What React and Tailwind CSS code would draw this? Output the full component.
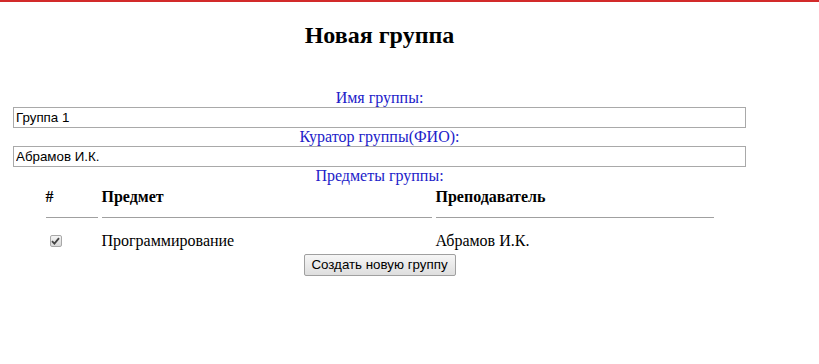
export default function App() {
  return (
    <div className="min-h-screen bg-white border-t-2 border-[#d22a2a] font-['Liberation_Serif',serif] text-black">
      <div className="ml-[13px] w-[733px] flex flex-col items-center">
        <h2 className="mt-[19px] text-[24px] leading-[28px] font-bold">Новая группа</h2>

        <label className="mt-[40px] h-[18px] text-[16px] leading-[18px] text-[#2121c9]">Имя группы:</label>
        <input
          defaultValue="Группа 1"
          className="w-full h-[21px] border border-[#a9a9a9] px-[2px] text-[13.33px] font-['Liberation_Sans',sans-serif] outline-none"
        />

        <label className="h-[18px] text-[16px] leading-[18px] text-[#2121c9]">Куратор группы(ФИО):</label>
        <input
          defaultValue="Абрамов И.К."
          className="w-full h-[21px] border border-[#a9a9a9] px-[2px] text-[13.33px] font-['Liberation_Sans',sans-serif] outline-none"
        />

        <label className="h-[18px] text-[16px] leading-[18px] text-[#2121c9]">Предметы группы:</label>

        <div className="grid grid-cols-[52px_330px_278px] gap-x-[4px] text-[16px] leading-[18px]">
          <div className="pt-[3px] pb-[11px] border-b border-[#a0a0a0] font-bold">#</div>
          <div className="pt-[3px] pb-[11px] border-b border-[#a0a0a0] font-bold">Предмет</div>
          <div className="pt-[3px] pb-[11px] border-b border-[#a0a0a0] font-bold">Преподаватель</div>

          <div className="mt-[14px] flex items-center pl-[4px]">
            <span className="w-[12px] h-[12px] rounded-[2px] border border-[#a8a8a8] bg-gradient-to-b from-[#f4f4f4] to-[#d8d8d8] flex items-center justify-center">
              <svg width="9" height="8" viewBox="0 0 9 8">
                <path d="M1 4.2 L3.4 6.6 L8 1.2" fill="none" stroke="#444" strokeWidth="1.8" />
              </svg>
            </span>
          </div>
          <div className="mt-[14px]">Программирование</div>
          <div className="mt-[14px]">Абрамов И.К.</div>
        </div>

        <button className="mt-[4px] h-[22px] w-[152px] rounded-[2px] border border-[#a0a0a0] bg-gradient-to-b from-[#f6f6f6] to-[#dedede] text-[13.33px] font-['Liberation_Sans',sans-serif] text-black">
          Создать новую группу
        </button>
      </div>
    </div>
  );
}
